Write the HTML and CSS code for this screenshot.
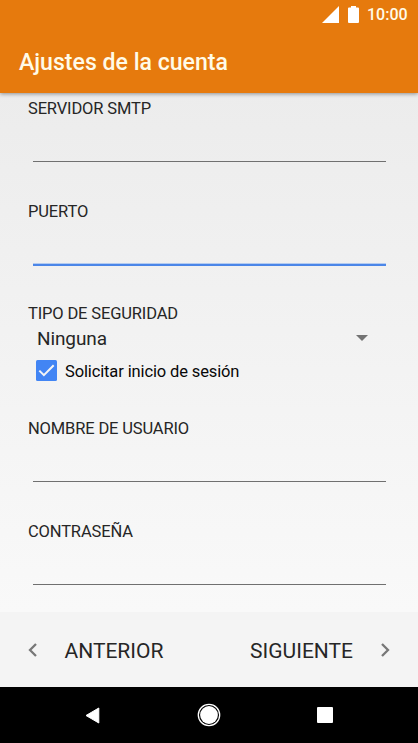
FILE: index.html
```html
<!DOCTYPE html>
<html lang="es">
<head>
<meta charset="utf-8">
<title>Ajustes de la cuenta</title>
<link rel="stylesheet" href="styles.css">
</head>
<body>
<div class="screen">
  <header class="appbar">
    <div class="status">
      <svg class="signal" width="17" height="17" viewBox="0 0 17 17"><path d="M17 0V17H0z"/></svg>
      <svg class="battery" width="11" height="17" viewBox="0 0 11 17"><path d="M3 0h5v1.500h2q1 0 1 1V16q0 1-1 1H1q-1 0-1-1V2.500q0-1 1-1h2z"/></svg>
      <span class="clock">10:00</span>
    </div>
    <h1 class="title">Ajustes de la cuenta</h1>
  </header>
  <main class="form">
    <div class="field"><label class="label" for="smtp">SERVIDOR SMTP</label><input class="input" id="smtp"></div>
    <div class="field"><label class="label" for="port">PUERTO</label><input class="input active" id="port"></div>
    <div class="security">
      <div class="label">TIPO DE SEGURIDAD</div>
      <div class="select"><span class="value">Ninguna</span><svg width="12" height="6" viewBox="0 0 12 6"><path d="M0 0h12L6 6z"/></svg></div>
      <div class="check"><svg width="21" height="21" viewBox="0 0 21 21"><rect width="21" height="21" rx="1.500" fill="#4285f4"/><path d="M3.300 10.600l4.600 4.600L17.700 5.200" fill="none" stroke="#f5f5f5" stroke-width="2"/></svg><span class="checktext">Solicitar inicio de sesión</span></div>
    </div>
    <div class="field"><label class="label" for="user">NOMBRE DE USUARIO</label><input class="input" id="user"></div>
    <div class="field"><label class="label" for="pass">CONTRASEÑA</label><input class="input" id="pass"></div>
  </main>
  <footer class="steps">
    <div class="step"><svg width="9" height="14" viewBox="0 0 9 14"><path d="M8 1L2 7l6 6"/></svg><span>ANTERIOR</span></div>
    <div class="step"><span>SIGUIENTE</span><svg width="9" height="14" viewBox="0 0 9 14"><path d="M1 1l6 6-6 6"/></svg></div>
  </footer>
  <nav class="nav">
    <svg width="15" height="17" viewBox="0 0 15 17"><path d="M13.800 1v15L1 8.500z" stroke="#fff" stroke-linejoin="round"/></svg>
    <svg width="24" height="24" viewBox="0 0 24 24"><circle cx="12" cy="12" r="8.900"/><circle cx="12" cy="12" r="10.700" fill="none" stroke="#fff" stroke-width="1.300"/></svg>
    <svg width="16" height="16" viewBox="0 0 16 16"><rect width="16" height="16" rx="1"/></svg>
  </nav>
</div>
</body>
</html>
```
FILE: styles.css
```css
* { box-sizing: border-box; }
body { margin: 0; font-family: Roboto, "Liberation Sans", sans-serif; color: #262626; }
svg { display: block; flex: none; }
.screen { width: 418px; height: 743px; display: flex; flex-direction: column; overflow: hidden; background: linear-gradient(#ececec 90px, #f9f9f9 612px); }
.appbar { height: 93px; flex: none; background: #e67a0d; color: #fffbe8; box-shadow: 0 1px 4px rgba(0,0,0,.4); }
.status { height: 30px; display: flex; justify-content: flex-end; align-items: center; padding: 0 10px 0 0; fill: #fff; }
.signal { margin-top: -2px; }
.battery { margin: -2px 8px 0 9px; }
.clock { width: 41px; font-size: 16px; font-weight: 500; line-height: 20px; white-space: nowrap; }
.title { margin: 18px 0 0 19px; font-size: 23.100px; font-weight: 500; line-height: 29px; white-space: nowrap; }
.form { height: 519px; flex: none; padding: 5px 28px 0; }
.field { height: 102.700px; }
.label { display: block; height: 20px; line-height: 21px; font-size: 16.500px; letter-spacing: -.15px; white-space: nowrap; }
.input { display: block; width: 353px; height: 44px; margin-left: 4.500px; padding: 0; border: 0; border-bottom: 1px solid #707070; outline: 0; background: none; }
.input.active { height: 45px; border-bottom: 0; background: linear-gradient(#b4cbf0, #b4cbf0) 0 42px / 100% 1px no-repeat, linear-gradient(#4b86e8, #4b86e8) 0 43px / 100% 2px no-repeat; }
.security { height: 115px; }
.select { height: 29px; display: flex; align-items: center; justify-content: space-between; padding: 1px 22.500px 0 9px; fill: #737373; }
.value { padding-top: 2px; font-size: 19px; line-height: 26px; letter-spacing: -.1px; }
.check { height: 36px; display: flex; align-items: center; gap: 8px; padding-left: 8px; color: #080808; }
.checktext { padding-top: 3px; font-size: 16.500px; line-height: 22px; letter-spacing: -.13px; white-space: nowrap; }
.steps { height: 75px; flex: none; display: flex; justify-content: space-between; padding: 2px 28px 0 27.500px; background: #f4f4f4; font-size: 21px; }
.step { display: flex; align-items: center; gap: 28px; height: 73px; white-space: nowrap; }
.step svg { margin-top: -2px; fill: none; stroke: #777; stroke-width: 2.300; }
.nav { height: 56px; flex: none; display: flex; align-items: center; justify-content: space-between; padding: 0 85px; background: #000; fill: #fff; }
```
